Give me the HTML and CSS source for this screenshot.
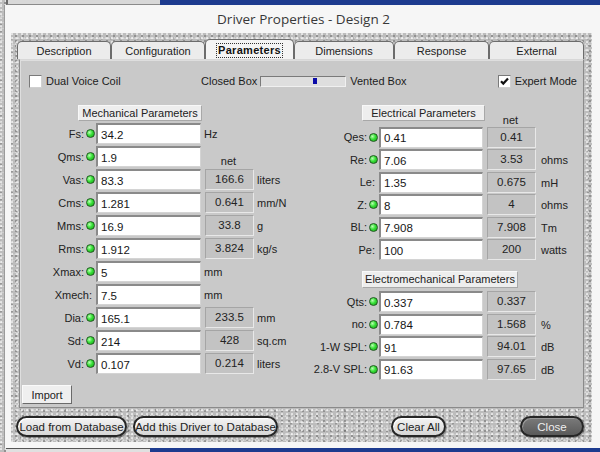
FILE: index.html
```html
<!DOCTYPE html>
<html>
<head>
<meta charset="utf-8">
<link rel="stylesheet" href="styles.css">
</head>
<body>
<div class="screen">
  <div class="topstrip">
    <div class="tex topedge"></div>
    <div class="toptab"></div>
    <div class="topblue"></div>
  </div>
  <div class="main">
    <div class="tex leftedge"></div>
    <div class="dialog">
      <div class="title">Driver Properties - Design 2</div>
      <div class="tex frame">
        <div class="tabs">
          <div class="tab w94">Description</div>
          <div class="tab w94">Configuration</div>
          <div class="tab sel w89"><span class="focus">Parameters</span></div>
          <div class="tab w100">Dimensions</div>
          <div class="tab w95">Response</div>
          <div class="tab w95">External</div>
        </div>
        <div class="panel">
          <div class="toprow">
            <div class="check first"><span class="box"></span><span>Dual Voice Coil</span></div>
            <div class="boxtype">
              <span>Closed Box</span>
              <span class="track"><span class="thumb"></span></span>
              <span>Vented Box</span>
            </div>
            <div class="check expert">
              <span class="box"><svg width="11" height="11" viewBox="0 0 11 11"><path d="M2 5.2 L4.3 7.6 L9 2.6" fill="none" stroke="#111" stroke-width="2.2"/></svg></span>
              <span>Expert Mode</span>
            </div>
          </div>
          <div class="cols">
            <div class="grid gridL">
              <div class="hdr hdrL">Mechanical Parameters</div>
              <div class="lbl">Fs:<i class="led"></i></div><div class="in">34.2</div><div class="u3">Hz</div>
              <div class="lbl">Qms:<i class="led"></i></div><div class="in">1.9</div><div class="netlbl">net</div>
              <div class="lbl">Vas:<i class="led"></i></div><div class="in">83.3</div><div class="net">166.6</div><div class="u">liters</div>
              <div class="lbl">Cms:<i class="led"></i></div><div class="in">1.281</div><div class="net">0.641</div><div class="u">mm/N</div>
              <div class="lbl">Mms:<i class="led"></i></div><div class="in">16.9</div><div class="net">33.8</div><div class="u">g</div>
              <div class="lbl">Rms:<i class="led"></i></div><div class="in">1.912</div><div class="net">3.824</div><div class="u">kg/s</div>
              <div class="lbl">Xmax:<i class="led"></i></div><div class="in">5</div><div class="u3">mm</div>
              <div class="lbl noled">Xmech:</div><div class="in">7.5</div><div class="u3">mm</div>
              <div class="lbl">Dia:<i class="led"></i></div><div class="in">165.1</div><div class="net">233.5</div><div class="u">mm</div>
              <div class="lbl">Sd:<i class="led"></i></div><div class="in">214</div><div class="net">428</div><div class="u">sq.cm</div>
              <div class="lbl">Vd:<i class="led"></i></div><div class="in">0.107</div><div class="net">0.214</div><div class="u">liters</div>
            </div>
            <div class="grid gridR">
              <div class="hdr hdrR">Electrical Parameters</div><div class="netlbl">net</div>
              <div class="lbl">Qes:<i class="led"></i></div><div class="in">0.41</div><div class="net">0.41</div>
              <div class="lbl">Re:<i class="led"></i></div><div class="in">7.06</div><div class="net">3.53</div><div class="u">ohms</div>
              <div class="lbl noled">Le:</div><div class="in">1.35</div><div class="net">0.675</div><div class="u">mH</div>
              <div class="lbl">Z:<i class="led"></i></div><div class="in">8</div><div class="net">4</div><div class="u">ohms</div>
              <div class="lbl">BL:<i class="led"></i></div><div class="in">7.908</div><div class="net">7.908</div><div class="u">Tm</div>
              <div class="lbl noled">Pe:</div><div class="in">100</div><div class="net">200</div><div class="u">watts</div>
              <div class="hdr hdrEM">Electromechanical Parameters</div>
              <div class="lbl">Qts:<i class="led"></i></div><div class="in">0.337</div><div class="net">0.337</div>
              <div class="lbl">no:<i class="led"></i></div><div class="in">0.784</div><div class="net">1.568</div><div class="u">%</div>
              <div class="lbl">1-W SPL:<i class="led"></i></div><div class="in">91</div><div class="net">94.01</div><div class="u">dB</div>
              <div class="lbl">2.8-V SPL:<i class="led"></i></div><div class="in">91.63</div><div class="net">97.65</div><div class="u">dB</div>
            </div>
          </div>
          <div class="importrow"><div class="btn import">Import</div></div>
        </div>
        <div class="buttons">
          <div class="pill load">Load from Database</div>
          <div class="pill add">Add this Driver to Database</div>
          <div class="pill clear">Clear All</div>
          <div class="pill close">Close</div>
        </div>
      </div>
    </div>
  </div>
  <div class="bottomstrip">
    <div class="tex botedge"></div>
    <div class="botlight"></div>
    <div class="topblue"></div>
  </div>
</div>
</body>
</html>
```

FILE: styles.css
```css
* { box-sizing: border-box; }
html, body { margin: 0; padding: 0; }
body {
  width: 600px;
  height: 452px;
  overflow: hidden;
  background: #f6f6f6;
  font-family: "Liberation Sans", Arial, sans-serif;
  font-size: 11px;
  color: #1c1c1c;
  white-space: nowrap;
}
.screen { display: flex; flex-direction: column; height: 452px; }

.tex {
  background-color: #bdbdbd;
  background-image:
    radial-gradient(circle at 20% 30%, rgba(255,255,255,.6) 0 0.8px, transparent 1.4px),
    radial-gradient(circle at 70% 60%, rgba(80,80,80,.4) 0 0.8px, transparent 1.4px),
    radial-gradient(circle at 50% 90%, rgba(255,255,255,.45) 0 0.7px, transparent 1.3px),
    radial-gradient(circle at 10% 80%, rgba(60,60,60,.3) 0 0.7px, transparent 1.3px);
  background-size: 5px 4px, 7px 5px, 3px 6px, 9px 7px;
}

.topstrip { height: 5px; display: flex; }
.topedge { width: 6px; }
.toptab { width: 154px; background: #d8d8d8; border-left: 2px solid #6a6a6a; border-bottom: 1px solid #8a8a8a; }
.topblue { flex: 1; background: #1d3b8f; }

.bottomstrip { height: 4px; display: flex; }
.botedge { width: 6px; }
.botlight { width: 144px; background: #e0e0e0; border-top: 1px solid #555; }

.main { display: flex; height: 443px; }
.leftedge { width: 6px; border-right: 1px solid #9a9a9a; }
.dialog { flex: 1; display: flex; flex-direction: column; background: #f6f6f6; }
.title {
  height: 28px;
  display: flex;
  align-items: center;
  justify-content: center;
  font-family: "Open Sans", "Liberation Sans", sans-serif;
  font-size: 13.5px;
  color: #383838;
  padding-left: 2px;
}
.frame {
  height: 409px;
  margin: 0 8px 0 6px;
  padding: 6px 8px 0;
  display: flex;
  flex-direction: column;
}

.tabs { height: 20px; display: flex; align-items: flex-end; margin-left: -2px; }
.tab {
  height: 18px;
  background: #ececec;
  border: 1px solid #6c6c6c;
  border-bottom: none;
  border-radius: 5px 5px 0 0;
  display: flex;
  align-items: center;
  justify-content: center;
  color: #222;
  padding-top: 1px;
}
.tab.sel { height: 20px; background: #f4f4f4; font-weight: bold; letter-spacing: 0.3px; color: #111; padding-top: 2px; }
.focus { border: 1px dotted #333; padding: 0 1px; line-height: 13px; }
.w94 { width: 94px; }
.w89 { width: 89px; }
.w100 { width: 100px; }
.w95 { width: 95px; }

.panel {
  height: 349px;
  background: #c9c9c9;
  border: 1px solid #8a8a8a;
  border-top-color: #d8d8d8;
  box-shadow: inset 1px 1px 0 #dedede;
  display: flex;
  flex-direction: column;
}

.toprow { display: flex; align-items: center; height: 16px; margin-top: 13px; padding: 0 6px 0 9px; }
.check { display: flex; align-items: center; gap: 4px; }
.check.first { width: 172px; }
.box {
  width: 13px; height: 13px;
  background: #fff;
  border: 1px solid #7a7a7a;
  border-right-color: #d0d0d0;
  border-bottom-color: #d0d0d0;
  display: flex; align-items: center; justify-content: center;
}
.expert { margin-left: auto; }
.boxtype { display: flex; align-items: center; gap: 3px; }
.track {
  width: 86px; height: 11px;
  background: #dedede;
  border: 1px solid #7a7a7a;
  border-right-color: #f0f0f0;
  border-bottom-color: #f0f0f0;
  display: flex; align-items: center;
  padding-left: 52px;
  margin-right: 1px;
}
.thumb { width: 4px; height: 6px; background: #0a0aa8; }

.cols { display: grid; grid-template-columns: 280px 283px; margin-top: 16px; }
.grid { display: grid; align-content: start; }
.gridL {
  grid-template-columns: 76px 105px 53px 1fr;
  grid-template-rows: 16px repeat(11, 21px);
  row-gap: 2px;
}
.gridR {
  grid-template-columns: 79px 104px 53px 1fr;
  grid-template-rows: 20px repeat(6, 21px) 28px repeat(4, 21px);
  row-gap: 1.5px;
}
.hdr {
  height: 16px;
  background: #eeeeee;
  border: 1px solid #f8f8f8;
  border-right-color: #a8a8a8;
  border-bottom-color: #a8a8a8;
  display: flex; align-items: center; justify-content: center;
  grid-column: 1 / 3;
  color: #222;
}
.hdrL { justify-self: start; margin-left: 58px; width: 124px; }
.hdrR { justify-self: start; margin-left: 62px; width: 123px; align-self: start; }
.hdrEM { grid-column: 1 / 4; justify-self: start; margin-left: 62px; width: 156px; height: 17px; align-self: end; margin-bottom: 2px; }
.lbl {
  grid-column: 1;
  display: flex; align-items: center; justify-content: flex-end;
  gap: 2px;
  padding-right: 1px;
  color: #222;
}
.lbl.noled { padding-right: 4px; }
.led {
  width: 9px; height: 9px;
  border-radius: 50%;
  border: 1px solid #1f5a1f;
  background: radial-gradient(circle at 35% 35%, #b8ffb0 0, #38e038 45%, #16a016 100%);
}
.in {
  grid-column: 2;
  background: #fff;
  border: 2px solid #8a8a8a;
  border-right: 1px solid #d4d4d4;
  border-bottom: 1px solid #d4d4d4;
  display: flex; align-items: center;
  padding-left: 3px;
  padding-top: 1px;
  font-size: 11.5px;
  color: #161616;
}
.net {
  grid-column: 3;
  margin-left: 4px;
  width: 49px;
  background: #c3c3c3;
  border: 1px solid #a5a5a5;
  border-right-color: #e8e8e8;
  border-bottom-color: #e8e8e8;
  display: flex; align-items: center; justify-content: center;
  color: #222;
  padding-bottom: 1px;
  font-size: 11.5px;
}
.netlbl {
  grid-column: 3;
  margin-left: 3px;
  width: 49px;
  text-align: center;
  align-self: end;
  line-height: 12px;
  color: #222;
}
.gridR .netlbl { margin-bottom: -1px; }
.u { grid-column: 4; display: flex; align-items: center; padding-left: 3px; padding-top: 1px; color: #222; }
.gridR .u { padding-left: 5px; }
.u3 { grid-column: 3; display: flex; align-items: center; padding-left: 3px; padding-top: 1px; color: #222; }

.importrow { margin-top: auto; padding: 0 0 3px 2px; display: flex; }
.btn.import {
  width: 50px; height: 19px;
  background: #efefef;
  border: 1px solid #fafafa;
  border-right-color: #6a6a6a;
  border-bottom-color: #6a6a6a;
  display: flex; align-items: center; justify-content: center;
  color: #222;
}

.buttons { display: flex; padding-top: 8px; margin-left: -3px; }
.pill {
  height: 21px;
  border: 2px solid #262626;
  border-radius: 11px;
  background: linear-gradient(#f4f4f4, #d6d6d6);
  box-shadow: 1px 1px 1px rgba(0,0,0,.35), inset 1px 1px 0 #fff;
  display: flex; align-items: center; justify-content: center;
  font-size: 11.5px;
  color: #222;
}
.load { width: 111px; }
.add { width: 145px; margin-left: 6px; }
.clear { width: 55px; margin-left: 113px; }
.close {
  width: 64px; margin-left: 74px;
  background: linear-gradient(#7a7a7a, #5a5a5a);
  color: #eeeeee;
  box-shadow: 1px 1px 1px rgba(0,0,0,.35), inset 1px 1px 0 #999;
}
```
